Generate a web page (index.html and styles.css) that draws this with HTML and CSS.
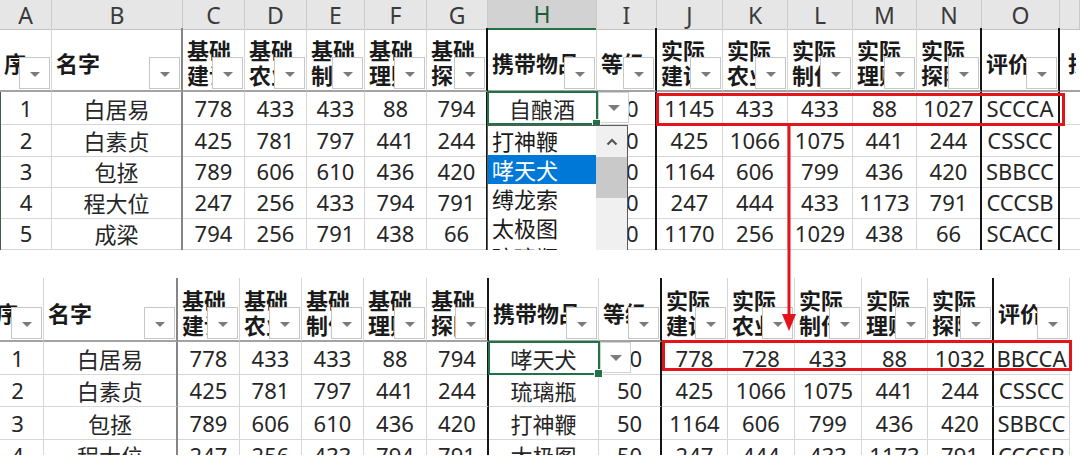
FILE: index.html
```html
<!DOCTYPE html>
<html lang="zh-CN">
<head>
<meta charset="utf-8">
<title>Sheet</title>
<link rel="stylesheet" href="styles.css">
</head>
<body>
<div class="page">
  <section class="sheet sheet-top">
    <div class="row letters">
      <div>A</div><div>B</div><div>C</div><div>D</div><div>E</div><div>F</div><div>G</div><div class="lsel">H</div><div>I</div><div>J</div><div>K</div><div>L</div><div>M</div><div>N</div><div>O</div><div></div>
    </div>
    <div class="row head">
      <div><span class="ht">序</span><i class="fb"></i></div>
      <div><span class="ht">名字</span><i class="fb"></i></div>
      <div><span class="ht">基础建设</span><i class="fb"></i></div>
      <div><span class="ht">基础农业</span><i class="fb"></i></div>
      <div><span class="ht">基础制作</span><i class="fb"></i></div>
      <div><span class="ht">基础理财</span><i class="fb"></i></div>
      <div><span class="ht">基础探险</span><i class="fb"></i></div>
      <div><span class="ht">携带物品</span><i class="fb"></i></div>
      <div><span class="ht">等级</span><i class="fb"></i></div>
      <div><span class="ht">实际建设</span><i class="fb"></i></div>
      <div><span class="ht">实际农业</span><i class="fb"></i></div>
      <div><span class="ht">实际制作</span><i class="fb"></i></div>
      <div><span class="ht">实际理财</span><i class="fb"></i></div>
      <div><span class="ht">实际探险</span><i class="fb"></i></div>
      <div><span class="ht">评价</span><i class="fb"></i></div>
      <div><span class="peek">技</span></div>
    </div>
    <div class="row data r32">
      <div>1</div><div>白居易</div><div>778</div><div>433</div><div>433</div><div>88</div><div>794</div>
      <div class="sel">自酿酒<span class="ddbtn"></span>
        <div class="ddlist">
          <div class="items">
            <div class="it">打神鞭</div>
            <div class="it on">哮天犬</div>
            <div class="it">缚龙索</div>
            <div class="it">太极图</div>
            <div class="it">琉璃瓶</div>
          </div>
          <div class="sbar">
            <div class="sup"><svg width="12" height="8" viewBox="0 0 12 8"><polyline points="1.5,6.5 6,2 10.5,6.5" fill="none" stroke="#555" stroke-width="2.2"/></svg></div>
            <div class="thumb"></div>
          </div>
        </div>
      </div>
      <div>50</div><div>1145</div><div>433</div><div>433</div><div>88</div><div>1027</div><div>SCCCA</div><div></div>
    </div>
    <div class="row data">
      <div>2</div><div>白素贞</div><div>425</div><div>781</div><div>797</div><div>441</div><div>244</div><div></div><div>50</div><div>425</div><div>1066</div><div>1075</div><div>441</div><div>244</div><div>CSSCC</div><div></div>
    </div>
    <div class="row data">
      <div>3</div><div>包拯</div><div>789</div><div>606</div><div>610</div><div>436</div><div>420</div><div></div><div>50</div><div>1164</div><div>606</div><div>799</div><div>436</div><div>420</div><div>SBBCC</div><div></div>
    </div>
    <div class="row data">
      <div>4</div><div>程大位</div><div>247</div><div>256</div><div>433</div><div>794</div><div>791</div><div></div><div>50</div><div>247</div><div>444</div><div>433</div><div>1173</div><div>791</div><div>CCCSB</div><div></div>
    </div>
    <div class="row data">
      <div>5</div><div>成梁</div><div>794</div><div>256</div><div>791</div><div>438</div><div>66</div><div></div><div>50</div><div>1170</div><div>256</div><div>1029</div><div>438</div><div>66</div><div>SCACC</div><div></div>
    </div>
    <div class="row data">
      <div></div><div></div><div></div><div></div><div></div><div></div><div></div><div></div><div></div><div></div><div></div><div></div><div></div><div></div><div></div><div></div>
    </div>
  </section>

  <section class="sheet sheet-bot">
    <div class="grid">
      <div class="row head">
        <div><span class="ht">序</span><i class="fb"></i></div>
        <div><span class="ht">名字</span><i class="fb"></i></div>
        <div><span class="ht">基础建设</span><i class="fb"></i></div>
        <div><span class="ht">基础农业</span><i class="fb"></i></div>
        <div><span class="ht">基础制作</span><i class="fb"></i></div>
        <div><span class="ht">基础理财</span><i class="fb"></i></div>
        <div><span class="ht">基础探险</span><i class="fb"></i></div>
        <div><span class="ht">携带物品</span><i class="fb"></i></div>
        <div><span class="ht">等级</span><i class="fb"></i></div>
        <div><span class="ht">实际建设</span><i class="fb"></i></div>
        <div><span class="ht">实际农业</span><i class="fb"></i></div>
        <div><span class="ht">实际制作</span><i class="fb"></i></div>
        <div><span class="ht">实际理财</span><i class="fb"></i></div>
        <div><span class="ht">实际探险</span><i class="fb"></i></div>
        <div><span class="ht">评价</span><i class="fb"></i></div>
        <div></div>
      </div>
      <div class="row data r32">
        <div>1</div><div>白居易</div><div>778</div><div>433</div><div>433</div><div>88</div><div>794</div>
        <div class="sel">哮天犬<span class="ddbtn"></span></div>
        <div>50</div><div>778</div><div>728</div><div>433</div><div>88</div><div>1032</div><div>BBCCA</div><div></div>
      </div>
      <div class="row data r33">
        <div>2</div><div>白素贞</div><div>425</div><div>781</div><div>797</div><div>441</div><div>244</div><div>琉璃瓶</div><div>50</div><div>425</div><div>1066</div><div>1075</div><div>441</div><div>244</div><div>CSSCC</div><div></div>
      </div>
      <div class="row data r32">
        <div>3</div><div>包拯</div><div>789</div><div>606</div><div>610</div><div>436</div><div>420</div><div>打神鞭</div><div>50</div><div>1164</div><div>606</div><div>799</div><div>436</div><div>420</div><div>SBBCC</div><div></div>
      </div>
      <div class="row data r32">
        <div>4</div><div>程大位</div><div>247</div><div>256</div><div>433</div><div>794</div><div>791</div><div>太极图</div><div>50</div><div>247</div><div>444</div><div>433</div><div>1173</div><div>791</div><div>CCCSB</div><div></div>
      </div>
    </div>
  </section>

  <div class="redbox rb-top"></div>
  <div class="redbox rb-bot"></div>
  <svg class="arrow" width="1080" height="469" viewBox="0 0 1080 469">
    <line x1="789" y1="124" x2="789" y2="318" stroke="#e3141b" stroke-width="3"/>
    <polygon points="782,314 796,314 789,331" fill="#e3141b"/>
  </svg>
</div>
</body>
</html>
```

FILE: styles.css
```css
* {
  box-sizing: border-box;
  margin: 0;
  padding: 0;
}

html,
body {
  width: 1080px;
  height: 469px;
  overflow: hidden;
  background: #fff;
}

body {
  font-family: "Noto Sans", "Noto Sans CJK SC", sans-serif;
  color: #262626;
}

.page {
  position: relative;
  width: 1080px;
  height: 469px;
  display: flex;
  flex-direction: column;
  gap: 28px;
}

.sheet {
  flex: none;
  overflow: hidden;
}

.sheet-top {
  height: 250px;
}

.sheet-bot {
  height: 177px;
}

.sheet-bot .grid {
  margin-left: -8px;
}

.row {
  display: grid;
}

.sheet-top .row {
  grid-template-columns: 52px 131px 62px 62px 58px 62px 61px 109px 60px 66px 65px 65px 64px 65px 78px 20px;
}

.sheet-bot .row {
  grid-template-columns: 52px 134px 62px 62px 62px 63px 62px 110px 63px 66px 67px 67px 66px 66px 76px 18px;
}

.row > div {
  position: relative;
  display: flex;
  align-items: center;
  justify-content: center;
  border-right: 1px solid #d6d6d6;
  border-bottom: 1px solid #d6d6d6;
  font-size: 22px;
  white-space: nowrap;
}

/* column letters */
.letters {
  height: 28px;
}

.letters > div {
  background: #e6e6e6;
  border-right-color: #cacaca;
  border-bottom-color: #c4c4c4;
  font-size: 23px;
  color: #3a3a3a;
  line-height: 28px;
}

.letters > .lsel {
  background: #d2d2d2;
  border-bottom: 2px solid #217346;
  color: #1d5e39;
}

/* header row */
.head {
  height: 64px;
}

.head > div {
  justify-content: flex-start;
  padding: 6px 2px 0 4px;
  border-bottom: 2px solid #a3a3a3;
  font-family: "Noto Sans CJK SC", sans-serif;
  font-weight: 700;
  color: #1a1a1a;
  line-height: 25px;
  white-space: normal;
}

.ht {
  display: block;
  min-width: 0;
  max-width: 100%;
  word-break: break-all;
}

.peek {
  display: block;
  width: 8px;
  margin-left: 4px;
  overflow: hidden;
}

.fb {
  position: absolute;
  right: 1px;
  bottom: 1px;
  width: 31px;
  height: 32px;
  background: #fff;
  border: 1px solid #c6c6c6;
}

.fb::after {
  content: "";
  position: absolute;
  left: 50%;
  top: 50%;
  margin-left: -5px;
  margin-top: -1px;
  border-left: 5px solid transparent;
  border-right: 5px solid transparent;
  border-top: 5px solid #7b7b7b;
}

/* data rows */
.data {
  height: 31px;
}

.data.r32 {
  height: 32px;
}

.data.r33 {
  height: 33px;
}

.data > div {
  font-weight: 400;
}

.sheet-top .data > div:first-child {
  border-left: 1px solid #3f5f4a;
}

/* thick separators */
.row:not(.letters) > div:nth-child(2) {
  border-right: 2px solid #858585;
}

.row:not(.letters) > div:nth-child(7),
.row:not(.letters) > div:nth-child(9),
.row:not(.letters) > div:nth-child(14) {
  border-right: 2px solid #151515;
}

.sheet-top .row:not(.letters) > div:nth-child(15) {
  border-right: 2px solid #151515;
}

.sheet-top .row:not(.letters) > div:nth-child(16) {
  border-right: none;
}

.sheet-bot .row > div:nth-child(16) {
  border: none;
}

/* selected cell */
.sel::before {
  content: "";
  position: absolute;
  left: -1px;
  top: -1px;
  right: -2px;
  bottom: -1px;
  border: 2px solid #217346;
  z-index: 2;
}

.sel::after {
  content: "";
  position: absolute;
  right: -5px;
  bottom: -4px;
  width: 7px;
  height: 7px;
  background: #217346;
  border: 1px solid #fff;
  z-index: 3;
}

.ddbtn {
  position: absolute;
  left: calc(100% + 2px);
  top: 0;
  width: 31px;
  height: 31px;
  background: #fff;
  border: 1px solid #d2d2d2;
  z-index: 3;
}

.ddbtn::after {
  content: "";
  position: absolute;
  left: 50%;
  top: 50%;
  margin-left: -6px;
  margin-top: -3px;
  border-left: 6px solid transparent;
  border-right: 6px solid transparent;
  border-top: 6px solid #7b7b7b;
}

/* dropdown list */
.ddlist {
  position: absolute;
  left: -1px;
  top: calc(100% + 1px);
  width: 141px;
  height: 160px;
  display: flex;
  background: #fff;
  border: 1px solid #5c5c5c;
  z-index: 4;
}

.items {
  flex: 1;
  display: flex;
  flex-direction: column;
}

.it {
  height: 29px;
  padding-left: 4px;
  font-family: "Noto Sans CJK SC", sans-serif;
  font-size: 22px;
  line-height: 29px;
  color: #1a1a1a;
}

.it.on {
  background: #0078d7;
  color: #fff;
}

.sbar {
  width: 31px;
  display: flex;
  flex-direction: column;
  background: #f0f0f0;
}

.sup {
  height: 31px;
  display: flex;
  align-items: center;
  justify-content: center;
}

.thumb {
  height: 41px;
  background: #c9c9c9;
}

/* annotations */
.redbox {
  position: absolute;
  border: 3px solid #e3141b;
  z-index: 6;
}

.rb-top {
  left: 656px;
  top: 93px;
  width: 409px;
  height: 33px;
}

.rb-bot {
  left: 662px;
  top: 340px;
  width: 410px;
  height: 31px;
}

.arrow {
  position: absolute;
  left: 0;
  top: 0;
  z-index: 7;
  pointer-events: none;
}
```
